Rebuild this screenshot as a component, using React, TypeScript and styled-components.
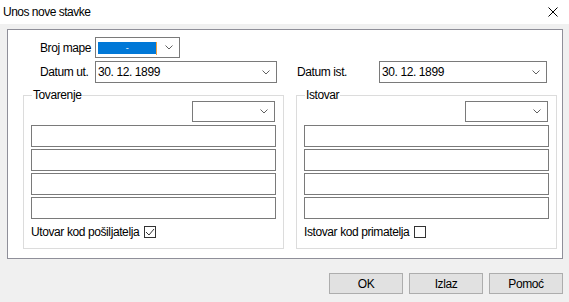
import React from "react";
import styled, { createGlobalStyle } from "styled-components";

const Global = createGlobalStyle`
  html, body { margin: 0; padding: 0; background: #f0f0f0; }
  body { font-family: "Liberation Sans", Arial, sans-serif; font-size: 12px; letter-spacing: -0.4px; color: #000; }
  * { box-sizing: border-box; }
`;

const Window = styled.div`
  width: 569px;
  height: 302px;
  background: #f0f0f0;
  display: flex;
  flex-direction: column;
  overflow: hidden;
`;

const TitleBar = styled.div`
  height: 24px;
  flex: none;
  background: #fff;
  display: flex;
  align-items: center;
  justify-content: space-between;
  padding: 0 11px 0 3px;
  font-size: 12px;
  letter-spacing: -0.5px;
`;

const Body = styled.div`
  padding: 5px 6px 0 7px;
`;

const Panel = styled.div`
  height: 230px;
  background: #fff;
  border: 1px solid #8f8f99;
  padding: 7px 5px 0 15px;
  display: flex;
  flex-direction: column;
`;

const TopGrid = styled.div`
  display: grid;
  grid-template-columns: 261px 261px;
  grid-template-rows: 21px 22px;
  column-gap: 12px;
  row-gap: 3px;
`;

const Cell = styled.div<{ $pl: number; $gap: number }>`
  display: flex;
  align-items: center;
  padding-left: ${(p) => p.$pl}px;
  gap: ${(p) => p.$gap}px;
`;

const Label = styled.span<{ $w: number; $right?: boolean }>`
  flex: none;
  width: ${(p) => p.$w}px;
  text-align: ${(p) => (p.$right ? "right" : "left")};
  white-space: nowrap;
`;

const Combo = styled.div<{ $w: number }>`
  flex: none;
  width: ${(p) => p.$w}px;
  height: 100%;
  background: #fff;
  border: 1px solid #7a7a7a;
  display: flex;
  align-items: center;
  padding-left: 2px;
`;

const ComboText = styled.span`
  flex: 1;
  white-space: pre;
`;

const Selection = styled.span`
  width: 58px;
  height: 12px;
  margin-top: 1px;
  background: #0078d7;
  color: #fff;
  display: flex;
  align-items: center;
  justify-content: center;
  font-size: 9px;
  line-height: 12px;
`;

const Caret = styled.span`
  width: 1px;
  height: 13px;
  background: #f0a040;
  margin-top: 1px;
`;

const ChevronWrap = styled.span`
  margin-left: auto;
  margin-right: 6px;
  display: flex;
`;

const GroupGrid = styled.div`
  display: grid;
  grid-template-columns: 261px 261px;
  column-gap: 12px;
  margin-top: 6px;
`;

const Group = styled.fieldset`
  margin: 0;
  min-width: 0;
  border: 1px solid #dcdcdc;
  padding: 0 7px 10px 7px;
`;

const Legend = styled.legend`
  padding: 0 1px;
  margin-left: 1px;
  line-height: 12px;
`;

const GroupBody = styled.div`
  display: flex;
  flex-direction: column;
`;

const SmallCombo = styled.div`
  align-self: flex-end;
  margin-right: 1px;
  width: 83px;
  height: 21px;
  background: #fff;
  border: 1px solid #7a7a7a;
  display: flex;
  align-items: center;
`;

const Fields = styled.div`
  display: flex;
  flex-direction: column;
  gap: 2px;
  margin-top: 3px;
`;

const TextField = styled.div`
  height: 22px;
  border: 1px solid #7a7a7a;
  background: #fff;
`;

const CheckRow = styled.div`
  margin-top: 7px;
  height: 12px;
  display: flex;
  align-items: center;
  gap: 5px;
  white-space: nowrap;
`;

const CheckBox = styled.span`
  width: 12px;
  height: 12px;
  border: 1px solid #333;
  background: #fff;
  display: flex;
  align-items: center;
  justify-content: center;
`;

const Footer = styled.div`
  display: flex;
  justify-content: flex-end;
  gap: 6px;
  padding-right: 6px;
  margin-top: 14px;
`;

const Button = styled.button`
  width: 74px;
  height: 21px;
  background: #e1e1e1;
  border: 1px solid #adadad;
  font-family: inherit;
  font-size: 12px;
  letter-spacing: -0.4px;
  color: #000;
  padding: 0;
`;

const Chevron = () => (
  <ChevronWrap>
    <svg width="8" height="5" viewBox="0 0 8 5">
      <polyline points="0.5,0.5 4,4 7.5,0.5" fill="none" stroke="#606060" strokeWidth="1" />
    </svg>
  </ChevronWrap>
);

const CloseIcon = () => (
  <svg width="10" height="10" viewBox="0 0 10 10">
    <path d="M0.5 0.5 L9.5 9.5 M9.5 0.5 L0.5 9.5" stroke="#000" strokeWidth="1" fill="none" />
  </svg>
);

const Check = ({ checked }: { checked: boolean }) => (
  <CheckBox>
    {checked && (
      <svg width="10" height="10" viewBox="0 0 10 10">
        <polyline points="1,5 4,8 9,2" fill="none" stroke="#333" strokeWidth="1" />
      </svg>
    )}
  </CheckBox>
);

const GroupPanel = ({ title, check, checked }: { title: string; check: string; checked: boolean }) => (
  <Group>
    <Legend>{title}</Legend>
    <GroupBody>
      <SmallCombo>
        <Chevron />
      </SmallCombo>
      <Fields>
        <TextField />
        <TextField />
        <TextField />
        <TextField />
      </Fields>
      <CheckRow>
        <span>{check}</span>
        <Check checked={checked} />
      </CheckRow>
    </GroupBody>
  </Group>
);

export default function App() {
  return (
    <Window>
      <Global />
      <TitleBar>
        <span>Unos nove stavke</span>
        <CloseIcon />
      </TitleBar>
      <Body>
        <Panel>
          <TopGrid>
            <Cell $pl={17} $gap={7}>
              <Label $w={48} $right>Broj mape</Label>
              <Combo $w={85}>
                <Selection>-</Selection>
                <Caret />
                <Chevron />
              </Combo>
            </Cell>
            <div />
            <Cell $pl={17} $gap={7}>
              <Label $w={48} $right>Datum ut.</Label>
              <Combo $w={182}>
                <ComboText>30. 12. 1899</ComboText>
                <Chevron />
              </Combo>
            </Cell>
            <Cell $pl={1} $gap={0}>
              <Label $w={82}>Datum ist.</Label>
              <Combo $w={168}>
                <ComboText>30. 12. 1899</ComboText>
                <Chevron />
              </Combo>
            </Cell>
          </TopGrid>
          <GroupGrid>
            <GroupPanel title="Tovarenje" check="Utovar kod pošiljatelja" checked />
            <GroupPanel title="Istovar" check="Istovar kod primatelja" checked={false} />
          </GroupGrid>
        </Panel>
      </Body>
      <Footer>
        <Button>OK</Button>
        <Button>Izlaz</Button>
        <Button>Pomoć</Button>
      </Footer>
    </Window>
  );
}
